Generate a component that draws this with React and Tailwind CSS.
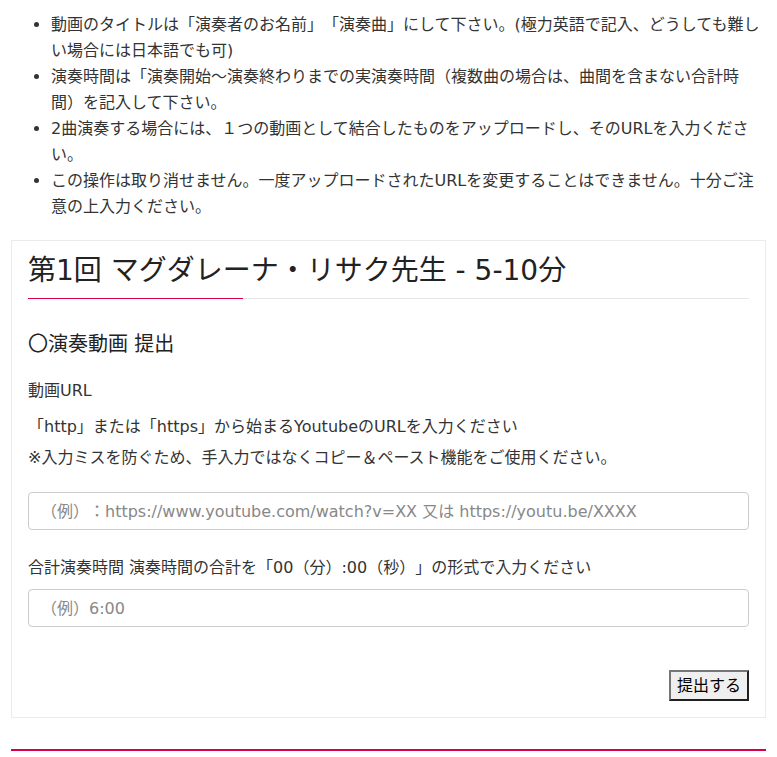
export default function App() {
  return (
    <div className="min-h-[757px] bg-white px-[11px] pt-3 font-['DejaVu_Sans','Noto_Sans_CJK_JP',sans-serif] text-[#333] [text-spacing-trim:space-all]">
      <ul className="list-disc pl-10 text-[16px] leading-[26px]">
        <li>動画のタイトルは「演奏者のお名前」「演奏曲」にして下さい。(極力英語で記入、どうしても難しい場合には日本語でも可)</li>
        <li>演奏時間は「演奏開始〜演奏終わりまでの実演奏時間（複数曲の場合は、曲間を含まない合計時間）を記入して下さい。</li>
        <li>2曲演奏する場合には、１つの動画として結合したものをアップロードし、そのURLを入力ください。</li>
        <li>この操作は取り消せません。一度アップロードされたURLを変更することはできません。十分ご注意の上入力ください。</li>
      </ul>

      <section className="mt-5 border border-[#ebebeb] p-4">
        <h2 className="text-[28px] leading-[28px] text-[#222]">第1回 マグダレーナ・リサク先生 - 5-10分</h2>
        <div className="mt-[13px] flex">
          <div className="h-px w-[215px] bg-[#d7004b]" />
          <div className="h-px flex-1 bg-[#e6e6e6]" />
        </div>

        <h3 className="mt-[30px] text-[20px] leading-[30px] text-[#222]">〇演奏動画 提出</h3>

        <p className="mt-5 text-[16px] leading-6">動画URL</p>
        <p className="mt-2 text-[16px] leading-[31px]">
          「http」または「https」から始まるYoutubeのURLを入力ください
          <br />
          ※入力ミスを防ぐため、手入力ではなくコピー＆ペースト機能をご使用ください。
        </p>

        <input
          type="text"
          placeholder="（例）：https://www.youtube.com/watch?v=XX 又は https://youtu.be/XXXX"
          className="mt-[19px] block h-[38px] w-full rounded-[4px] border border-[#ccc] px-3 text-[16px] placeholder:text-[#888] focus:outline-none"
        />

        <p className="mt-[26px] text-[16px] leading-6">合計演奏時間 演奏時間の合計を「00（分）:00（秒）」の形式で入力ください</p>
        <input
          type="text"
          placeholder="（例）6:00"
          className="mt-[9px] block h-[38px] w-full rounded-[4px] border border-[#ccc] px-3 text-[16px] placeholder:text-[#888] focus:outline-none"
        />

        <div className="mt-[43px] flex justify-end">
          <button
            type="button"
            className="h-[31px] border-2 border-t-[#767676] border-l-[#767676] border-r-[#1f1f1f] border-b-[#1f1f1f] bg-[#efefef] px-[6px] text-[16px] leading-none text-black"
          >
            提出する
          </button>
        </div>
      </section>

      <div className="mt-[31px] h-[2px] bg-[#d7004b]" />
    </div>
  );
}
